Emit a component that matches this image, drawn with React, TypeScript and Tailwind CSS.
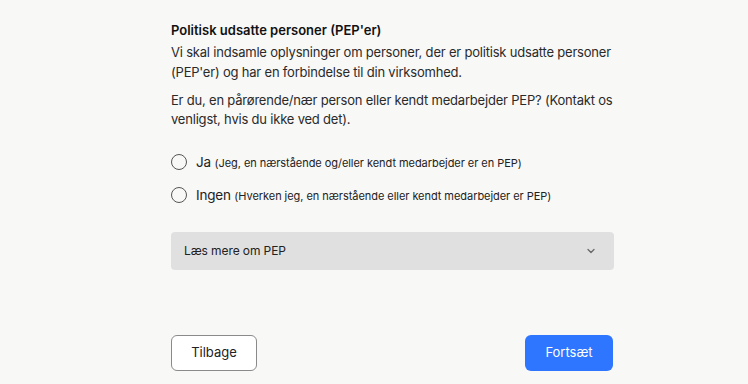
import React from "react";

function Radio({ label, sub }: { label: string; sub: string }) {
  return (
    <label className="flex items-center gap-[9px] h-[20px]">
      <span className="w-[16px] h-[16px] rounded-full border-[1.5px] border-[#555] bg-transparent shrink-0" />
      <span className="text-[13.5px] text-[#222] tracking-[-0.2px]">
        {label} <span className="text-[11px] tracking-[-0.05px]">{sub}</span>
      </span>
    </label>
  );
}

export default function App() {
  return (
    <div
      className="w-[748px] h-[384px] bg-[#f8f8f7] text-[#1f1f1f] overflow-hidden"
      style={{ fontFamily: "Inter, 'Noto Sans', sans-serif" }}
    >
      <div className="ml-[171px] w-[443px] pt-[20px] flex flex-col">
        <h2 className="text-[13px] font-semibold leading-[20px] text-[#111]">
          Politisk udsatte personer (PEP'er)
        </h2>
        <p className="mt-[2px] text-[13px] leading-[20px] text-[#2a2a2a] tracking-[-0.2px]">
          Vi skal indsamle oplysninger om personer, der er politisk udsatte personer (PEP'er) og har en forbindelse til din virksomhed.
        </p>
        <p className="mt-[9px] text-[13px] leading-[19px] text-[#2a2a2a] tracking-[-0.2px]">
          Er du, en pårørende/nær person eller kendt medarbejder PEP? (Kontakt os venligst, hvis du ikke ved det).
        </p>
        <div className="mt-[23px] flex flex-col gap-[13px]">
          <Radio label="Ja" sub="(Jeg, en nærstående og/eller kendt medarbejder er en PEP)" />
          <Radio label="Ingen" sub="(Hverken jeg, en nærstående eller kendt medarbejder er PEP)" />
        </div>
        <button className="mt-[27px] h-[38px] w-full rounded-[4px] bg-[#e0e0e0] flex items-center justify-between pl-[13px] pr-[17px] text-[12px] tracking-[-0.1px] text-[#222]">
          <span>Læs mere om PEP</span>
          <svg width="12" height="12" viewBox="0 0 24 24" fill="none" stroke="#666" strokeWidth="2.5" strokeLinecap="round" strokeLinejoin="round">
            <path d="M6 9l6 6 6-6" />
          </svg>
        </button>
        <div className="mt-[65px] flex justify-between pr-[1px]">
          <button className="w-[86px] h-[36px] rounded-[6px] border border-[#8a8a8a] bg-white text-[13px] text-[#222]">
            Tilbage
          </button>
          <button className="w-[88px] h-[36px] rounded-[6px] bg-[#2e75ff] text-[13px] text-white">
            Fortsæt
          </button>
        </div>
      </div>
    </div>
  );
}
